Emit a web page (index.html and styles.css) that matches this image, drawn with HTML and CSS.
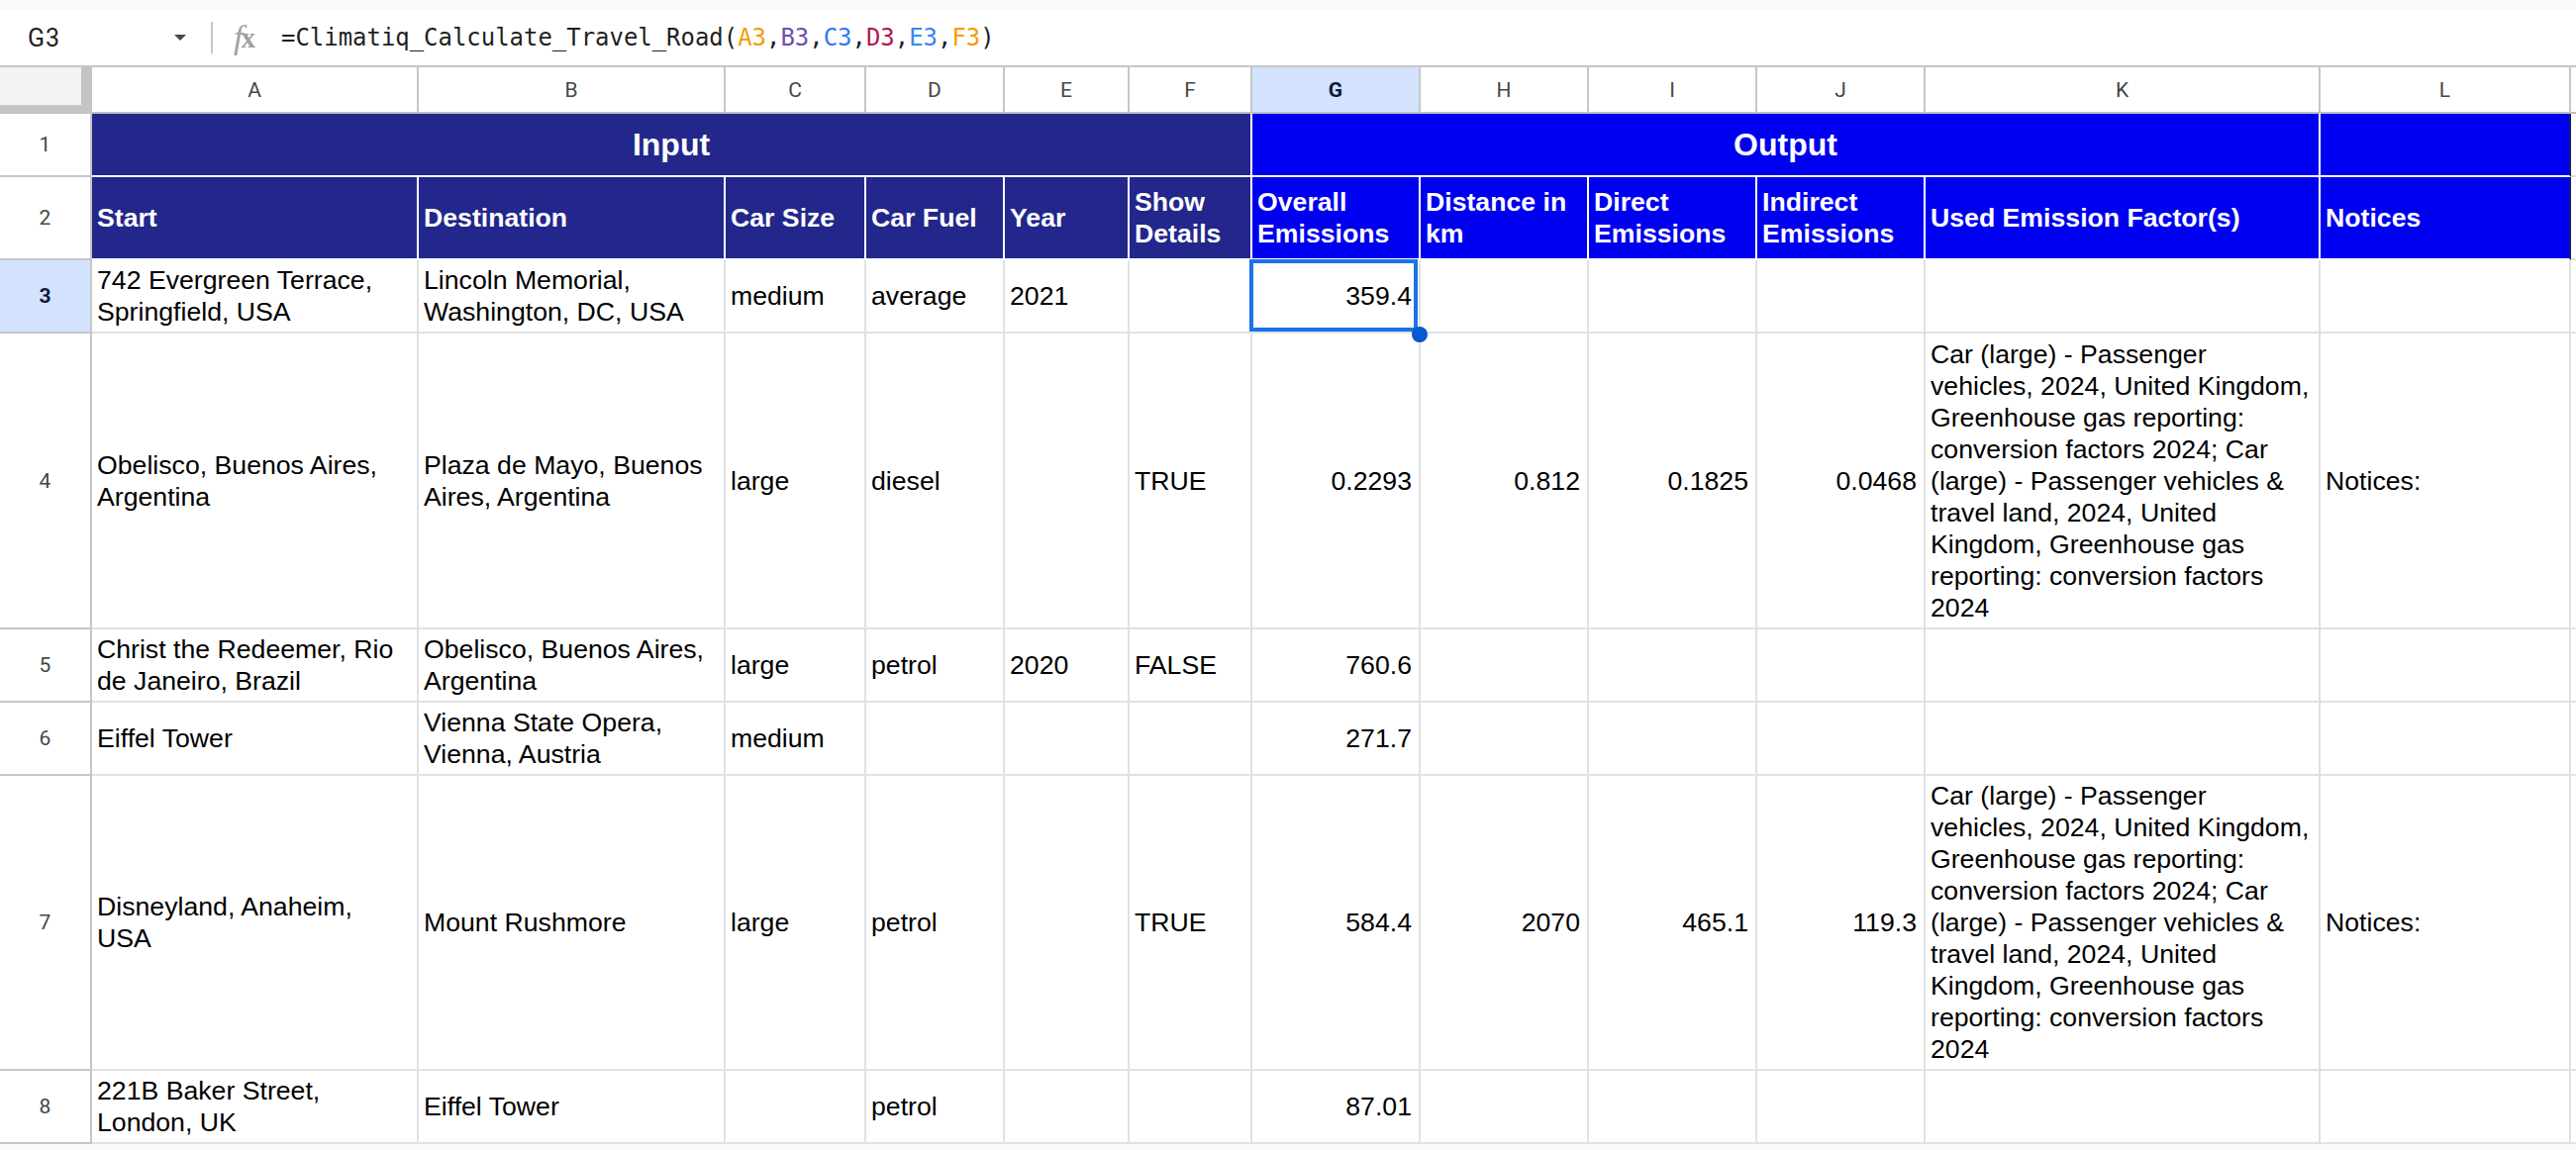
FILE: index.html
```html
<!DOCTYPE html>
<html lang="en">
<head>
<meta charset="utf-8">
<title>Climatiq sheet</title>
<link rel="stylesheet" href="styles.css">
</head>
<body>
<div class="topstrip"></div>
<div class="fbar">
  <div class="namebox"><span class="nb-text">G3</span><span class="nb-caret"></span></div>
  <div class="fdiv"></div>
  <span class="fx"><i>f</i><b>x</b></span>
  <div class="formula">=Climatiq_Calculate_Travel_Road(<span class="r1">A3</span>,<span class="r2">B3</span>,<span class="r3">C3</span>,<span class="r4">D3</span>,<span class="r5">E3</span>,<span class="r1">F3</span>)</div>
</div>
<div class="sheet">
  <!-- column headers -->
  <div class="corner"></div>
  <div class="ch">A</div><div class="ch">B</div><div class="ch">C</div><div class="ch">D</div><div class="ch">E</div><div class="ch">F</div>
  <div class="ch sel">G</div><div class="ch">H</div><div class="ch">I</div><div class="ch">J</div><div class="ch">K</div><div class="ch">L</div><div class="ch last"></div>

  <!-- row 1 -->
  <div class="rh">1</div>
  <div class="h navy title span6">Input</div>
  <div class="h blue title span5">Output</div>
  <div class="h blue edge"></div>
  <div class="c last"></div>

  <!-- row 2 -->
  <div class="rh">2</div>
  <div class="h navy"><span>Start</span></div>
  <div class="h navy"><span>Destination</span></div>
  <div class="h navy"><span>Car Size</span></div>
  <div class="h navy"><span>Car Fuel</span></div>
  <div class="h navy"><span>Year</span></div>
  <div class="h navy"><span>Show Details</span></div>
  <div class="h blue"><span>Overall Emissions</span></div>
  <div class="h blue"><span>Distance in km</span></div>
  <div class="h blue"><span>Direct Emissions</span></div>
  <div class="h blue"><span>Indirect Emissions</span></div>
  <div class="h blue"><span>Used Emission Factor(s)</span></div>
  <div class="h blue edge"><span>Notices</span></div>
  <div class="c last"></div>

  <!-- row 3 -->
  <div class="rh sel">3</div>
  <div class="c"><span>742 Evergreen Terrace, Springfield, USA</span></div>
  <div class="c"><span>Lincoln Memorial, Washington, DC, USA</span></div>
  <div class="c"><span>medium</span></div>
  <div class="c"><span>average</span></div>
  <div class="c"><span>2021</span></div>
  <div class="c"></div>
  <div class="c num selcell"><span>359.4</span><div class="selbox"></div><div class="handle"></div></div>
  <div class="c"></div>
  <div class="c"></div>
  <div class="c"></div>
  <div class="c k"></div>
  <div class="c"></div>
  <div class="c last"></div>

  <!-- row 4 -->
  <div class="rh">4</div>
  <div class="c"><span>Obelisco, Buenos Aires, Argentina</span></div>
  <div class="c"><span>Plaza de Mayo, Buenos Aires, Argentina</span></div>
  <div class="c"><span>large</span></div>
  <div class="c"><span>diesel</span></div>
  <div class="c"></div>
  <div class="c"><span>TRUE</span></div>
  <div class="c num"><span>0.2293</span></div>
  <div class="c num"><span>0.812</span></div>
  <div class="c num"><span>0.1825</span></div>
  <div class="c num"><span>0.0468</span></div>
  <div class="c k"><span>Car (large) - Passenger vehicles, 2024, United Kingdom, Greenhouse gas reporting: conversion factors 2024; Car (large) - Passenger vehicles &amp; travel land, 2024, United Kingdom, Greenhouse gas reporting: conversion factors 2024</span></div>
  <div class="c"><span>Notices:</span></div>
  <div class="c last"></div>

  <!-- row 5 -->
  <div class="rh">5</div>
  <div class="c"><span>Christ the Redeemer, Rio de Janeiro, Brazil</span></div>
  <div class="c"><span>Obelisco, Buenos Aires, Argentina</span></div>
  <div class="c"><span>large</span></div>
  <div class="c"><span>petrol</span></div>
  <div class="c"><span>2020</span></div>
  <div class="c"><span>FALSE</span></div>
  <div class="c num"><span>760.6</span></div>
  <div class="c"></div>
  <div class="c"></div>
  <div class="c"></div>
  <div class="c k"></div>
  <div class="c"></div>
  <div class="c last"></div>

  <!-- row 6 -->
  <div class="rh">6</div>
  <div class="c"><span>Eiffel Tower</span></div>
  <div class="c"><span>Vienna State Opera, Vienna, Austria</span></div>
  <div class="c"><span>medium</span></div>
  <div class="c"></div>
  <div class="c"></div>
  <div class="c"></div>
  <div class="c num"><span>271.7</span></div>
  <div class="c"></div>
  <div class="c"></div>
  <div class="c"></div>
  <div class="c k"></div>
  <div class="c"></div>
  <div class="c last"></div>

  <!-- row 7 -->
  <div class="rh">7</div>
  <div class="c"><span>Disneyland, Anaheim, USA</span></div>
  <div class="c"><span>Mount Rushmore</span></div>
  <div class="c"><span>large</span></div>
  <div class="c"><span>petrol</span></div>
  <div class="c"></div>
  <div class="c"><span>TRUE</span></div>
  <div class="c num"><span>584.4</span></div>
  <div class="c num"><span>2070</span></div>
  <div class="c num"><span>465.1</span></div>
  <div class="c num"><span>119.3</span></div>
  <div class="c k"><span>Car (large) - Passenger vehicles, 2024, United Kingdom, Greenhouse gas reporting: conversion factors 2024; Car (large) - Passenger vehicles &amp; travel land, 2024, United Kingdom, Greenhouse gas reporting: conversion factors 2024</span></div>
  <div class="c"><span>Notices:</span></div>
  <div class="c last"></div>

  <!-- row 8 -->
  <div class="rh">8</div>
  <div class="c"><span>221B Baker Street, London, UK</span></div>
  <div class="c"><span>Eiffel Tower</span></div>
  <div class="c"></div>
  <div class="c"><span>petrol</span></div>
  <div class="c"></div>
  <div class="c"></div>
  <div class="c num"><span>87.01</span></div>
  <div class="c"></div>
  <div class="c"></div>
  <div class="c"></div>
  <div class="c k"></div>
  <div class="c"></div>
  <div class="c last"></div>
</div>
<div class="bottomstrip"></div>
</body>
</html>
```
FILE: styles.css
```css
* { box-sizing: border-box; }
html, body { margin: 0; padding: 0; background: #fff; overflow: hidden; }
body {
  width: 2602px;
  height: 1162px;
  font-family: "Liberation Sans", Arial, sans-serif;
}

.topstrip { height: 10px; background: #f8fafb; }

.fbar {
  height: 56px;
  display: flex;
  align-items: center;
  background: #fff;
}
.namebox {
  width: 213px;
  height: 100%;
  display: flex;
  align-items: center;
  padding-left: 28px;
  font-family: Roboto, "Noto Sans", sans-serif;
  font-size: 25px;
  color: #1f1f1f;
}
.nb-text { width: 148px; letter-spacing: 1px; }
.nb-caret {
  width: 0; height: 0;
  border-left: 6px solid transparent;
  border-right: 6px solid transparent;
  border-top: 6px solid #444746;
}
.fdiv { width: 2px; height: 32px; background: #c7c7c7; }
.fx {
  margin-left: 21px;
  width: 29px;
  font-family: "Liberation Serif", serif;
  font-size: 34px;
  color: #9ea1a4;
  display: flex;
  align-items: center;
  letter-spacing: -2px;
}
.fx i { font-style: italic; }
.fx b { font-weight: bold; font-size: 29px; }
.formula {
  margin-left: 19px;
  font-family: "DejaVu Sans Mono", "Liberation Mono", monospace;
  font-size: 23.95px;
  color: #1f1f1f;
  white-space: nowrap;
}
.r1 { color: #f29d00; }
.r2 { color: #6f4fb0; }
.r3 { color: #2f7cf0; }
.r4 { color: #b0184c; }
.r5 { color: #3a86f0; }

.sheet {
  display: grid;
  grid-template-columns: 93px 330px 310px 142px 140px 126px 124px 170px 170px 170px 170px 399px 253px 1fr;
  grid-template-rows: 47px 64px 84px 74px 299px 74px 74px 298px 74px;
  border-top: 2px solid #c4c7c5;
}

.corner {
  background: #f1f3f4;
  border-right: 11px solid #c4c4c4;
  border-bottom: 9px solid #c4c4c4;
}
.ch {
  display: flex;
  align-items: center;
  justify-content: center;
  font-family: Roboto, "Noto Sans", sans-serif;
  font-size: 21px;
  color: #444746;
  border-right: 2px solid #c4c7c5;
  border-bottom: 2px solid #c0c0c0;
}
.ch.sel, .rh.sel {
  background: #d3e3fd;
  color: #0b1b3d;
  font-weight: bold;
}
.ch.last { border-right: none; }

.rh {
  display: flex;
  align-items: center;
  justify-content: center;
  font-family: Roboto, "Noto Sans", sans-serif;
  font-size: 21px;
  color: #444746;
  background: #fff;
  border-right: 2px solid #c4c7c5;
  border-bottom: 2px solid #c4c7c5;
}

.c {
  display: flex;
  align-items: center;
  padding: 0 7px 0 5px;
  font-size: 26.67px;
  line-height: 32px;
  color: #000;
  border-right: 2px solid #e1e1e1;
  border-bottom: 2px solid #e1e1e1;
}
.c.num { justify-content: flex-end; text-align: right; }
.c.k { padding: 0 6px 0 5px; }
.c.last { border-right: none; padding: 0; }

.h {
  display: flex;
  align-items: center;
  padding: 0 5px;
  font-weight: bold;
  color: #fff;
  font-size: 26.67px;
  line-height: 32px;
  border-right: 2px solid #fff;
  border-bottom: 2px solid #fff;
}
.navy { background: #23278b; }
.blue { background: #0000f0; }
.h.edge { border-right-color: #1a1a66; }
.title { justify-content: center; font-size: 32px; }
.span6 { grid-column: span 6; }
.span5 { grid-column: span 5; }

.selcell { position: relative; z-index: 2; }
.selbox {
  position: absolute;
  left: -3px;
  top: -1px;
  right: 1px;
  bottom: 0;
  border: 4px solid #1a73e8;
}
.handle {
  position: absolute;
  left: 161px;
  top: 67px;
  width: 16px;
  height: 16px;
  border-radius: 50%;
  background: #0b57d0;
}

.bottomstrip { height: 6px; background: #f8f9fa; }
```
